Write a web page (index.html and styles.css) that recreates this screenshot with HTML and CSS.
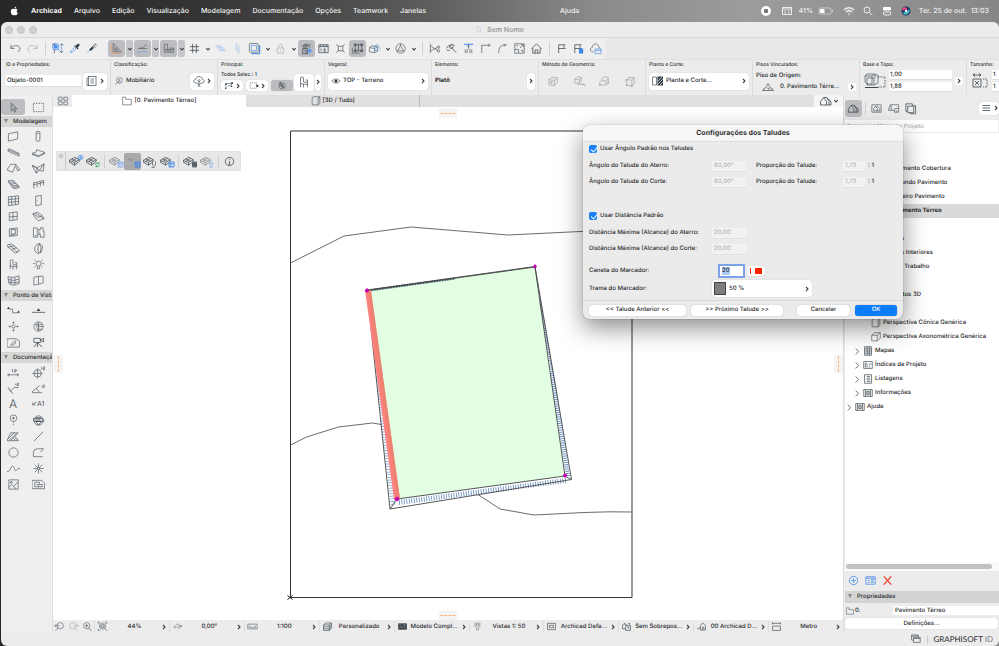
FILE: index.html
```html
<!DOCTYPE html>
<html lang="pt-BR">
<head>
<meta charset="utf-8">
<title>Sem Nome</title>
<link rel="stylesheet" href="styles.css">
</head>
<body>
<svg class="sprite" aria-hidden="true">
<symbol id="undo" viewBox="0 0 14 14"><path d="M2 3v4h4M2.200 6.800C4 3.500 10 2.500 11.500 6c1 2.500-.5 4.500-2 4.500"/></symbol>
<symbol id="redo" viewBox="0 0 14 14"><path d="M12 3v4H8M11.800 6.800C10 3.500 4 2.500 2.500 6c-1 2.500.5 4.500 2 4.500"/></symbol>
<symbol id="find" viewBox="0 0 14 14"><circle class="bl" cx="5" cy="5" r="3.500"/><circle class="bf" cx="5" cy="5" r="1.800"/><path class="b" d="M7.500 7.500l3.500 4M11.500 2v9"/><path class="d" d="M1.500 2.500h3M3.500 8v4M10 3.500L11.500 2 13 3.500M10 10l1.500 1.500L13 10"/></symbol>
<symbol id="pick" viewBox="0 0 14 14"><path class="b" d="M2.500 11.500l.8-2L7 5.800l1.500 1.500-3.800 3.500z"/><path class="df" d="M6.500 4l4 4 .8-.8-1-1.200 2-2q.5-1.500-.5-2t-2 .3L8 4.200l-.8-.8z"/></symbol>
<symbol id="inject" viewBox="0 0 14 14"><path class="b" d="M2.500 11.500L6 8"/><path class="df" d="M4.500 8l1.800 1.800 3.500-3.500L8 4.500z"/><path class="d" d="M8.500 3l3 3M9.700 4.200l2-2M10.700 1.500l2 2"/></symbol>
<symbol id="guide" viewBox="0 0 14 14"><path class="o" d="M2 2v10h11"/><path d="M3.500 1.500v9h8.500zM5.500 6v2.700h2.700z"/></symbol>
<symbol id="snap" viewBox="0 0 14 14"><path d="M2 7h10M4.500 5l2.500 2 4-4.500"/><path class="b" d="M2 10.500h10" stroke-dasharray="1.500 .7"/></symbol>
<symbol id="ruler" viewBox="0 0 14 14"><path d="M2.500 2.500v8.500h10V8H6V2.500zM2.500 8H6M4.500 9.500h6M8 6.500h4.500v2"/></symbol>
<symbol id="hash" viewBox="0 0 14 14"><path class="d" d="M5 2v10M9 2v10M2 5h10M2 9h10"/></symbol>
<symbol id="planeh" viewBox="0 0 14 14"><path class="b" d="M1.500 4h6l5 5.500h-6zM3.500 6h6M5 8h6M4.500 4l5 5.500"/></symbol>
<symbol id="planev" viewBox="0 0 14 14"><path class="b" d="M5.500 2l3 3v7l-3-3zM5.500 5.500l3 3"/></symbol>
<symbol id="frame" viewBox="0 0 14 14"><path class="b" d="M12.500 3.500v9h-9" stroke-width="1.400"/><rect x="1.500" y="1.500" width="9.500" height="9.500" rx="1"/><rect x="3.500" y="3.500" width="5.500" height="5.500" class="b"/></symbol>
<symbol id="lock" viewBox="0 0 14 14"><rect x="3.500" y="6.500" width="7" height="5.500" rx=".5"/><path d="M5 6.500V3.500q2-3 4 0v3M7 8.500v1.500"/></symbol>
<symbol id="group" viewBox="0 0 14 14"><path class="d" d="M2.500 4h7l2-1.500M3 12V7h5v5M3.500 4L5 2.500h4M9 4l2 2M4.500 9h2v3M2 12.500h7M3 5.500h5"/><circle class="bf" cx="10.500" cy="9.500" r="1.500"/><path class="b" d="M10.500 6.500v6M7.800 9.500h5.400M8.600 7.600l3.800 3.800M12.400 7.600l-3.800 3.800"/></symbol>
<symbol id="m12" viewBox="0 0 14 14"><path class="d" d="M2 11.500V3h10v8.500zM2 5h10M4 3v2M7 3v2M10 3v2M4.500 7v3M7 7.500h2v1H7.500V10H9.500"/></symbol>
<symbol id="cross" viewBox="0 0 14 14"><rect x="4.500" y="4.500" width="5" height="5"/><path d="M2.500 2.500l2.500 2.500M11.500 2.500L9 5M2.500 11.500L5 9M11.500 11.500L9 9"/></symbol>
<symbol id="edit" viewBox="0 0 14 14"><path d="M4.500 3h7v6.500h-7zM1.500 6v6h8"/><path class="d" d="M3.500 2h2v2h-2zM10.500 2h2v2h-2zM3.500 8.500h2v2h-2zM10.500 8.500h2v2h-2zM8 2v8"/></symbol>
<symbol id="cube3" viewBox="0 0 14 14"><path d="M1.500 6L4 4l6 1v5l-3 1.500-5.500-1zM1.500 6L7 7l3-2M7 7v4.500"/><path class="b" d="M6 6l3.500-3.500L13 7l-3.500 3.500z"/></symbol>
<symbol id="tri" viewBox="0 0 14 14"><circle cx="7" cy="7" r="5"/><path d="M7 3.500L4 9.500h6zM7 2v1.500M4 9.500L3 11M10 9.500L11 11"/></symbol>
<symbol id="split" viewBox="0 0 14 14"><path d="M2.500 2v10M2.500 4l7.500 5M2.500 9.500L10 6"/><circle cx="11.300" cy="5.500" r="1.300"/><circle cx="11.300" cy="9.500" r="1.300"/></symbol>
<symbol id="intersect" viewBox="0 0 14 14"><path class="d" d="M1.500 7q2-4.500 6.500-3.500M2 9h3M6 5l6 6.500M4.500 5.500L8 2l2 2-3.500 3.500z"/></symbol>
<symbol id="adjust" viewBox="0 0 14 14"><path class="b" d="M2 2.500h10" stroke-width="1.300"/><path d="M7 3v4M5.500 5L7 3.500 8.500 5M3.500 12V8M5.500 12V7.500M8.500 12V7.500M10.500 12V8"/></symbol>
<symbol id="corner" viewBox="0 0 14 14"><path d="M3 12V3.500h9M10 2l2 1.500L10 5"/></symbol>
<symbol id="fillet" viewBox="0 0 14 14"><path d="M3 12V9q1-5.500 6-6h3M9 2v3"/></symbol>
<symbol id="resize" viewBox="0 0 14 14"><rect x="2" y="2" width="10" height="10"/><path d="M2 8h4v4M7.500 6.500L11 3M8.500 3H11v2.500M3.500 4h2M8.500 9h2v2"/></symbol>
<symbol id="home" viewBox="0 0 14 14"><path class="d" d="M1.500 7.500L7 2l5.500 5.500M3 6.500V12h8V6.500M5.500 12V8.500h3V12"/></symbol>
<symbol id="flag" viewBox="0 0 14 14"><path class="d" d="M4 12V3h7L9 5l2 2H4"/></symbol>
<symbol id="flagb" viewBox="0 0 14 14"><path class="d" d="M3 12V3h7L8 5l2 2H3"/><path class="bf" d="M7.500 7H12v5.500H7.500z"/></symbol>
<symbol id="cloud" viewBox="0 0 14 14"><path d="M5 10.500H3.500C.5 10 1 6 3.500 6c0-5 7-5 7-.5l2 1.500"/><path class="b" d="M6.500 7.500H13v5H6.500zM6.500 9.200H13"/></symbol>
<symbol id="list" viewBox="0 0 14 14"><rect x="3.500" y="2.500" width="7.500" height="9"/><path d="M5.500 5h3.500M5.500 7h3.500M5.500 9h3.500M3.500 4H2v7.500h3"/></symbol>
<symbol id="classif" viewBox="0 0 14 14"><circle cx="7.500" cy="6" r="4.200"/><path d="M1.500 12l4-3.500M5.500 4.500l4 3M8.500 3.500L6 8.500h3"/></symbol>
<symbol id="tree" viewBox="0 0 14 14"><path d="M4.500 9C1 9.500 1 5.500 3.500 5.500 4 1.500 10 1.500 10.500 5.500 13 5.500 13 9.500 9.500 9L7 10.500zM7 5v7M5.500 6.500L7 8l1.500-1.500M5.500 12h3"/></symbol>
<symbol id="conn" viewBox="0 0 14 14"><path d="M3 11V5l8-1M10 4v4M5 8.500l5-3"/><path class="df" d="M2 4h2v2H2zM10 3h2v2h-2zM2 10h1.500v1.500H2zM9 7.500h2v1.500H9z"/></symbol>
<symbol id="dash" viewBox="0 0 14 14"><path stroke-dasharray="1.500 1" d="M2 3.500h8v7H2z"/><path class="df" d="M10 6h2.500v3H10z"/></symbol>
<symbol id="rotate" viewBox="0 0 14 14"><circle cx="7" cy="7.500" r="4"/><path class="d" d="M4.500 2v5.500H8L5 3M7 5.500v4h2.500z"/></symbol>
<symbol id="chair" viewBox="0 0 14 14"><path d="M3.500 7.500V2.500q1.500-1.500 3 0V7l4 .5v2l-4-.5-3-.5zM3.500 8v4M6.500 9v3.500M10.500 9v3M8.500 5h2v2.500"/></symbol>
<symbol id="eye" viewBox="0 0 14 14"><path d="M2 7q5-5 10 0-5 5-10 0z"/><circle class="df" cx="7" cy="7" r="1.800"/></symbol>
<symbol id="geo" viewBox="0 0 14 14"><path d="M2 5l3-2.500 6 .5v5l-3 3.500-6-.8zM2 5l6 .7L11 3M8 5.700v5.800M4 7h1.500v2H4z"/></symbol>
<symbol id="geo2" viewBox="0 0 14 14"><path d="M2 4.500L5 2l4 .5v4L7 9l-5-.8zM2 4.500l5 .7L9 2.500M7 5.200V9M4 10h8l1 1.500M10 9l3 2.500"/></symbol>
<symbol id="geo3" viewBox="0 0 14 14"><path d="M2 8l2-2 5 .5L11 4v4L8.500 11 2 10.500zM4 6V4l3-2 4 .5V4M8.500 7v4"/><circle class="df" cx="2" cy="11" r=".8"/><circle class="df" cx="11" cy="8.500" r=".8"/></symbol>
<symbol id="geo4" viewBox="0 0 14 14"><path d="M3 5l2-2.500 6 .5v6L8.500 12 3 11zM3 5l5.500.5L11 3M8.500 5.500V12M3 5L1 6"/><circle class="df" cx="3" cy="11" r=".8"/><circle class="df" cx="8.500" cy="12" r=".8"/></symbol>
<symbol id="plan" viewBox="0 0 14 14"><path d="M1.500 3h4v8h-4z"/><path class="df" d="M6.500 2.500H12v9H6.500z"/><path stroke="#ddd" d="M7 7l4-4M7 10l5-5M9 11l3-3"/></symbol>
<symbol id="house" viewBox="0 0 14 14"><path d="M1 10.500h12M4 10.500c-3-1-1-3 0-2l3-5 3 5c1-1 3 1 0 2M6 8h2v2"/></symbol>
<symbol id="houses" viewBox="0 0 14 14"><path class="d" d="M1.500 11V7.500l3-4 3 4V11zM4.500 3.500h3l4.500 4v3.500H7.500M7.500 3.500L10 7v4"/></symbol>
<symbol id="tall" viewBox="0 0 24 18"><path d="M2 4h7v8H4L2 10zM4 6h7v7H4zM2 4l2-2h8v4M9 4l3-2M12 3h3v8l-4 2"/><path class="d" d="M2 15.500h13" stroke-width="1.200"/><path class="d" stroke-dasharray="1.500 1" d="M15 5h7v10h-7"/></symbol>
<symbol id="size" viewBox="0 0 18 18"><path class="d" d="M2 3h8M4 1.500L2 3l2 1.500M8 1.500L10 3 8 4.500M2 7h8v8H2zM4 9l4 4M8 9l-4 4"/><path class="d" stroke-dasharray="1.500 1" d="M12 7h4v8h-4"/></symbol>
<symbol id="four" viewBox="0 0 14 14"><path d="M1.500 2.500h4.500v3.500H1.500zM8 2.500h4.500v3.500H8zM1.500 8h4.500v3.500H1.500zM8 8h4.500v3.500H8z"/></symbol>
<symbol id="folder" viewBox="0 0 14 14"><path d="M2 11.500V2.500h3.500V5H12v6.500z"/></symbol>
<symbol id="box3" viewBox="0 0 14 14"><path d="M2.500 3l2-1h7v8l-2 1.500h-7zM9.500 11.500V3.500l2-1.500"/></symbol>
<symbol id="arrow" viewBox="0 0 14 14"><path d="M4.500 2v9l2-2 1.500 3 1.500-.8L8 8.500h3z" fill="#aaa"/></symbol>
<symbol id="marq" viewBox="0 0 14 14"><path class="d" stroke-dasharray="1.500 1.200" d="M1.500 2.500h11v9h-11z"/></symbol>
<symbol id="wall" viewBox="0 0 14 14"><path d="M1.500 4l10-2v7.500l-10 2.500z"/></symbol>
<symbol id="column" viewBox="0 0 14 14"><path d="M4.500 3v8.500q2.500 1.500 4 0V3"/><ellipse cx="6.500" cy="2.500" rx="2" ry="1.200"/></symbol>
<symbol id="beam" viewBox="0 0 14 14"><path d="M1 4l1.500-1L13 8v3L1 5.500zM1 4l12 5"/></symbol>
<symbol id="slab" viewBox="0 0 14 14"><path d="M0 8l4.500-1.500L5 4l9 3-7 3.500zM0 8v1l7 2.500 7-3.500V7"/></symbol>
<symbol id="roof" viewBox="0 0 14 14"><path d="M4 2.500h5.500L6 11 0 8.500zM9.500 2.500l4.500 6-2.500 1-2-4.500"/></symbol>
<symbol id="shell" viewBox="0 0 14 14"><path d="M0 3.500l6 2.500L13 2l-1 8-4-1-3.500 3zM0 3.500L8 9l5-7M6 6L4.500 12"/></symbol>
<symbol id="stair" viewBox="0 0 14 14"><path d="M1.500 3l5-.5 7 7.500-5 1.500zM3.500 4.800L8.500 4M5 6.500l5-.7M6.500 8.500l5.500-1M7.500 10l5.500-1M1.500 3v1.500l6 7.500"/></symbol>
<symbol id="rail" viewBox="0 0 14 14"><path d="M1 5.500l12-3M1 7.500l12-3M2 5.500v6M5.500 5v5M9 4v5M12.500 3v5"/></symbol>
<symbol id="curtain" viewBox="0 0 14 14"><path d="M1.500 3l11-1v9l-11 1.500zM1.500 6l11-1M1.500 9l11-1M5 2.500v9.500M9 2.300v9.200"/></symbol>
<symbol id="door" viewBox="0 0 14 14"><path d="M4 2.500l6-1v10L4 12.500zM5.500 7v1"/></symbol>
<symbol id="window" viewBox="0 0 14 14"><path d="M2.500 3l8.500-1v8.500l-8.500 1zM2.500 7.500l8.500-.7M6.500 2.500v8.500"/></symbol>
<symbol id="sky" viewBox="0 0 14 14"><path d="M1 4l5-1.500L11 6 7 8zM3 8l4 3.500 6-2L9 7M1 4l2 4M11 6l2 3.500M4 3.500l5 3.500"/></symbol>
<symbol id="open" viewBox="0 0 14 14"><path d="M2.500 3l8.500-.8v8l-8.500 1zM4.500 4l4.500-.5v5l-4.500 2zM4.500 9L9 8.500"/></symbol>
<symbol id="zone" viewBox="0 0 14 14"><path d="M1.500 2h4v2H9V2h3v4h1v6H9V9H6v3H1.500zM5 5.500h3M5 7.500h4M3 10h2"/></symbol>
<symbol id="mesh" viewBox="0 0 14 14"><path d="M-1 3.500L5 2l8.500 7.500-4.500 2.500zM2 5.500L8 4M5 8l5.500-2M2.500 3l8.500 8M2 5.500L0 4.500"/></symbol>
<symbol id="morph" viewBox="0 0 14 14"><path d="M5 3l3-1.500 3.500 3L10 11l-4 1.500-3-3Q2 6 5 3zM8 1.500q-3 5-1 10.500M8 2q3 4 1 9"/></symbol>
<symbol id="lamp" viewBox="0 0 14 14"><circle cx="7" cy="6" r="2.700"/><path d="M5.800 9v2.500h2.400V9M1 6h2M11 6h2M2.500 2L4 3.200M11.500 2L10 3.200M2.500 10L4 8.800M11.500 10L10 8.800"/></symbol>
<symbol id="curved" viewBox="0 0 14 14"><path d="M1 3q6 2 12-1v8q-6 4-11 0zM1.500 6q6 2 11.500-.5M1.500 8.500q6 2 11.500 0M4.500 4v7M8.500 4v7.500"/></symbol>
<symbol id="panel" viewBox="0 0 14 14"><path d="M2 3.500l5-1v8.500l-5 1zM7 2.500h5v7L7 11"/></symbol>
<symbol id="section" viewBox="0 0 14 14"><path d="M2 5.500h4v4h6"/><path class="df" d="M0 5.500L1.500 3 3 5.500zM11 9.500L12.500 7 14 9.500z"/></symbol>
<symbol id="elev" viewBox="0 0 14 14"><path class="d" d="M0 9h14"/><path class="df" d="M5 7.500l2-3 2 3z"/></symbol>
<symbol id="interior" viewBox="0 0 14 14"><circle cx="7" cy="7" r="1.800"/><path class="df" d="M5.800 3.500L7 1.500l1.200 2zM5.800 10.500L7 12.500l1.200-2zM3.500 5.800L1.500 7l2 1.200zM10.500 5.800L12.500 7l-2 1.200z"/></symbol>
<symbol id="globe" viewBox="0 0 14 14"><circle cx="7" cy="7" r="5"/><path d="M7 2v10M7 7h5M3 4.500q4 2 8 0M7 10h4M7 3Q3 7 7 11"/></symbol>
<symbol id="sheet" viewBox="0 0 14 14"><path d="M0 12V3h10l3.500 2.500V12zM4 9.500L8 6l1.500 1.500L6 10zM8 5.500l2-.5"/></symbol>
<symbol id="camera" viewBox="0 0 14 14"><path class="d" d="M2 2.500h7v4.500H2zM9 4.500l3.500-2v4zM6 7v5M6 7l-4 5M6 7l5 5"/></symbol>
<symbol id="dim" viewBox="0 0 14 14"><path d="M0 9.500h13M2 8v3M11.500 8v3M5 4.500l1-1v3M8 4h2v1.200H8V6.500h2"/></symbol>
<symbol id="level" viewBox="0 0 14 14"><circle cx="6" cy="8" r="4"/><path d="M6 2.500v11M.5 8h11M10.500 1v3M12 1h2v1.500h-2V4h2"/></symbol>
<symbol id="radial" viewBox="0 0 14 14"><path d="M1 5.500q2 5 5.500 7M4.500 9l3-3h5M2.500 8l3 3M9.500 1.500v2.500M11 1.500h1.500v1H11v1.500h2"/></symbol>
<symbol id="angle" viewBox="0 0 14 14"><path d="M-1 11.500h12M-1 11.500L8 4M4.500 7q3 2 3 4.500M15 3q-2 4-3.500 3t0-2.500T15 6"/></symbol>
<symbol id="pin" viewBox="0 0 14 14"><circle cx="7" cy="4.500" r="3.500"/><circle class="df" cx="7" cy="4.500" r="1"/><path d="M7 8V13" stroke-dasharray="1.500 1"/></symbol>
<symbol id="changed" viewBox="0 0 14 14"><circle cx="7" cy="7" r="5"/><path class="d" d="M1.500 5h10l1 3h-10zM4 8h6l-3 4zM4 4h6M4 6.500h5"/></symbol>
<symbol id="fill" viewBox="0 0 14 14"><path d="M0 11.500L4 3h8L8.500 7l4 4.500zM1 9.500L8 3M2 11.500L10 4M4 11.500L8 7.500M7 11.500l2.500-2.500M9.500 11.500l1.500-1.500"/></symbol>
<symbol id="line" viewBox="0 0 14 14"><path d="M2 12L12 2"/></symbol>
<symbol id="circle" viewBox="0 0 14 14"><circle cx="7" cy="7" r="5"/></symbol>
<symbol id="poly" viewBox="0 0 14 14"><path d="M1.500 11.500h10M1.500 11.500V7q0-4 4-4h7L9 6.500"/></symbol>
<symbol id="spline" viewBox="0 0 14 14"><path d="M0 10C3 12.500 4 3 6.500 4.500S7.500 11 10 9s1.500-3 4-1.500"/></symbol>
<symbol id="hot" viewBox="0 0 14 14"><path d="M7 1.500v11M1.500 7h11M3 3l8 8M11 3l-8 8"/><circle cx="7" cy="7" r="1.200" fill="#fff"/></symbol>
<symbol id="pic" viewBox="0 0 14 14"><path d="M2 2h10v10H2zM2 10l3-3 2 2 5-5M7 9l3 3M4 4h1.500v1.500H4z"/></symbol>
<symbol id="drawing" viewBox="0 0 14 14"><path d="M0 11.500v-9h10l3.500 3v6zM3 4.500v5h8V7H8V4.500zM5 7h2v2.500"/></symbol>
<symbol id="slope" viewBox="0 0 14 14"><path class="d" d="M0 6l6-3.500 5 2.500L6 8zM0 6v1.500L6 11l5-4V5M3 4.300l5 2.500M3 7l5-3.500M6 8v3"/></symbol>
<symbol id="plus" viewBox="0 0 14 14"><circle cx="7" cy="7" r="4.500"/><path d="M7 4.500v5M4.500 7h5"/></symbol>
<symbol id="card" viewBox="0 0 14 14"><path d="M2 3h10v8H2zM2 4.500h10M4 7h2M7.500 6h3M7.500 7.500h3M7.500 9h3M4 9h2"/></symbol>
<symbol id="grid" viewBox="0 0 14 14"><path d="M2 2h10v10H2zM2 5.500h10M6 5.500V12" stroke-width="1.800"/></symbol>
<symbol id="cycle" viewBox="0 0 14 14"><path d="M2 8q2-6 8-3M10 2v3H7M12 7q-2 6-8 3M4 13v-3h3" stroke-width="1.600"/></symbol>
<symbol id="u" viewBox="0 0 14 14"><path d="M3 1v7q3 6 6 0V1M1 13h6" stroke-width="1.600"/></symbol>
<symbol id="up" viewBox="0 0 14 14"><path d="M4 13V5H2l4-4 4 4H8v8z" stroke-width="1.300"/></symbol>
<symbol id="x" viewBox="0 0 14 14"><path d="M3 2.500l8 9M11 2.500l-8 9"/></symbol>
<symbol id="info" viewBox="0 0 14 14"><circle class="d" cx="7" cy="7" r="4.500"/><path class="d" d="M7 6.200V10M7 4v1.200M6 10h2"/></symbol>
<symbol id="map" viewBox="0 0 14 14"><path d="M2 3h10v8H2zM4 9.500V7l2-2.500L8 7v2.500zM6 4.500h2L10.500 7v2.500H8"/></symbol>
<symbol id="layout" viewBox="0 0 14 14"><path d="M1.500 9l2-6h9v8H8V9zM4.500 3v6M8 9l.5-2h4M10 9v2"/></symbol>
<symbol id="stack" viewBox="0 0 14 14"><path class="d" d="M4 4.500h6.500v7H4zM4 10H2V2h7v2.500M6 11.500l1 1.200h5.500V4l-2-.5"/></symbol>
<symbol id="menu" viewBox="0 0 14 14"><path class="d" d="M3.500 4.500h7.500M3.500 7h7.500M3.500 9.500h7.500"/></symbol>
<symbol id="table" viewBox="0 0 14 14"><path class="d" d="M3 2h8v10H3zM3 4.500h8M3 7h8M3 9.500h8M6 2v10M8.500 2v10"/></symbol>
<symbol id="index" viewBox="0 0 14 14"><path class="d" d="M2 3h10v8H2zM4 5v5M6 6v4M8 6h3M9 8v2M4 5h2"/></symbol>
<symbol id="lists" viewBox="0 0 14 14"><path class="d" d="M3 2h8v10H3zM5.500 4h4M5.500 6h4M5.500 8h4M5.500 10h4"/></symbol>
<symbol id="infos" viewBox="0 0 14 14"><path class="d" d="M2 3h10v8H2zM4 3v8M10 3v8M5.500 5h3v4h-3zM7 5v4"/></symbol>
<symbol id="zprev" viewBox="0 0 14 14"><circle cx="8" cy="6" r="4"/><path d="M5 9l-3 3.500M1 6h6M3 4L1 6l2 2"/></symbol>
<symbol id="znext" viewBox="0 0 14 14"><circle cx="6" cy="6" r="4"/><path d="M9 9l3 3.500M7 6h6M11 4l2 2-2 2"/></symbol>
<symbol id="zin" viewBox="0 0 14 14"><circle cx="6" cy="6" r="4"/><path class="d" d="M9 9l3 3.500M6 4v4M4 6h4"/></symbol>
<symbol id="zfit" viewBox="0 0 14 14"><circle cx="7" cy="6.500" r="4"/><path class="d" d="M10 9.500l3 3M1.500 1.500h2M1.500 1.500v2M12.500 1.500h-2M12.500 1.500v2M1.500 12V10M1.500 12h2M5 5h4v3H5z"/></symbol>
<symbol id="turn" viewBox="0 0 14 14"><path d="M5 9L3 7.500 7 3.500l2 2M6 9l3.500-3.500L11.500 7 8 10.500M3 7L1.500 8.500M12 5v2h-2"/></symbol>
<symbol id="scale" viewBox="0 0 14 14"><path d="M1 4h12v6H1zM3 6v2h8V6"/></symbol>
<symbol id="layers" viewBox="0 0 14 14"><path class="d" d="M2 5l3-2.500h7L9.500 5zM2 7.500h7.500L12 5M2 10h7.500L12 7.500M2 12h7.500L12 9.500v-7M2 5v7M9.500 5v7"/></symbol>
<symbol id="model" viewBox="0 0 14 14"><path class="df" d="M1.500 3h11v8h-11z"/><path d="M3 5h2M7 5h4M3 9l2-2 2 2 2-2 2 2" stroke="#bbb"/></symbol>
<symbol id="pens" viewBox="0 0 14 14"><path d="M4 2v5l2 2v3M10 2v5L8 9v3M6 2v4l1 1 1-1V2"/></symbol>
<symbol id="opt" viewBox="0 0 14 14"><path class="d" d="M2 3h10v8H2zM4.500 5.500h5v3h-5z"/></symbol>
<symbol id="over" viewBox="0 0 14 14"><path class="d" d="M2 10V5l3-2v2h3M6 6h6v6H6zM2 10h4M8 8h2v2M9 3h2v3"/></symbol>
<symbol id="reno" viewBox="0 0 14 14"><path class="d" d="M1.500 10l4-1.500V6l3-3.500L12 6v5.500H5.500V8.500M8 11V8h2v3"/></symbol>
<symbol id="meter" viewBox="0 0 14 14"><path class="d" d="M2 3h10M2 1.500v3M12 1.500v3M2 6.500h10V12H2z"/></symbol>
<symbol id="windows" viewBox="0 0 14 14"><path class="d" d="M2 2.500h8.500v3M2 2.500v6.500h2M2 4h8.500M4.500 5.500H13V12H4.500zM4.500 7H13"/></symbol>
<symbol id="chev" viewBox="0 0 6 6"><path class="d" d="M2 1l2 2-2 2" stroke-width="1.100"/></symbol>
<symbol id="chevt" viewBox="0 0 6 6"><path d="M1.500.5L4 3 1.500 5.500"/></symbol>
<symbol id="down" viewBox="0 0 6 6"><path class="d" d="M1.200 2.200L3 4l1.800-1.800" stroke-width="1.100"/></symbol>
</svg>

<nav class="menubar">
  <svg class="apple" viewBox="0 0 14 16"><path d="M10.500 8.300c0-1.700 1.300-2.400 1.500-2.600-.9-1.200-2.200-1.400-2.700-1.400-1.100 0-1.800.7-2.400.7s-1.400-.7-2.400-.6C2.600 4.400 1 6 1 8.800c0 3 2 6 3.600 6 .9 0 1.300-.6 2.400-.6s1.400.6 2.400.6c1.300 0 2.500-2.200 3-3.600-1.300-.6-1.900-1.600-1.900-2.900zM9 3.100c.6-.7.900-1.500.8-2.400C8.600.8 7 2 7.100 4 7.900 4 8.600 3.600 9 3.100z"/></svg>
  <a href="#" class="app">Archicad</a><a href="#">Arquivo</a><a href="#">Edição</a><a href="#">Visualização</a><a href="#">Modelagem</a><a href="#">Documentação</a><a href="#">Opções</a><a href="#">Teamwork</a><a href="#">Janelas</a><a href="#" class="help">Ajuda</a>
  <div class="tray">
    <svg viewBox="0 0 14 14"><circle cx="7" cy="7" r="5" class="wf"/><rect x="5" y="5" width="4" height="4" rx="1" fill="#777" stroke="none"/></svg>
    <svg class="cal" viewBox="0 0 14 14"><path d="M2.500 3.500h9v7h-9zM2.500 5h9M4.500 7h1.500M8 7h1.500M4.500 9h1.500M8 9h1.500"/></svg>
    <span class="pct">41%</span>
    <svg class="batt" viewBox="0 0 16 14"><rect x="1" y="4" width="12" height="6" rx="1.500" opacity=".6"/><rect class="wf" x="2" y="5" width="4.500" height="4"/><path d="M14.500 6v2" opacity=".6"/></svg>
    <svg viewBox="0 0 14 14"><path d="M2 6q5-4.500 10 0M4 8q3-2.700 6 0" stroke-width="1.500"/><path class="wf" d="M5.700 9.500h2.600L7 11z"/></svg>
    <svg viewBox="0 0 14 14"><circle cx="6" cy="6" r="3"/><path d="M8.300 8.300l3 3"/></svg>
    <svg viewBox="0 0 14 14"><rect class="wf" x="3" y="3" width="8" height="3.500" rx="1"/><rect x="3.500" y="8" width="7" height="3" rx="1"/></svg>
    <svg viewBox="0 0 14 14"><circle cx="7" cy="7" r="4.500" fill="#263259" stroke="none"/><path d="M3.500 6q3-4 4 1" stroke="#ec4b85" stroke-width="2"/><path d="M4.500 9q4 2 5.500-3" stroke="#3cc6dc" stroke-width="2"/><circle cx="7" cy="7" r="1.200" class="wf"/></svg>
    <span class="date">Ter. 25 de out.&nbsp; 13:03</span>
  </div>
</nav>

<div class="window">
<header class="titlebar"><span class="lights"><i></i><i></i><i></i></span><svg class="docicon" viewBox="0 0 8 8"><path d="M1 1l4 1v5L2 6z"/></svg><h1>Sem Nome</h1></header>

<div class="toolbar">
  <button class="tb"><svg><use href="#undo"/></svg></button><button class="tb off"><svg><use href="#redo"/></svg></button><i class="sep"></i>
  <button class="tb"><svg><use href="#find"/></svg></button><button class="tb"><svg><use href="#pick"/></svg></button><button class="tb"><svg><use href="#inject"/></svg></button><i class="sep clear"></i>
  <button class="tb on"><svg><use href="#guide"/></svg></button><button class="tc on"><svg class="s"><use href="#down"/></svg></button>
  <button class="tb on"><svg><use href="#snap"/></svg></button><button class="tc on"><svg class="s"><use href="#down"/></svg></button>
  <button class="tb on"><svg><use href="#ruler"/></svg></button><button class="tc on"><svg class="s"><use href="#down"/></svg></button>
  <button class="tb"><svg><use href="#hash"/></svg></button><button class="tc"><svg class="s"><use href="#down"/></svg></button>
  <button class="tb off"><svg><use href="#planeh"/></svg></button><button class="tb off"><svg><use href="#planev"/></svg></button><button class="tb"><svg><use href="#frame"/></svg></button><button class="tc"><svg class="s"><use href="#down"/></svg></button>
  <button class="tb off"><svg><use href="#lock"/></svg></button><button class="tc"><svg class="s"><use href="#down"/></svg></button>
  <button class="tb on"><svg><use href="#group"/></svg></button><button class="tb"><svg><use href="#m12"/></svg></button><button class="tb"><svg><use href="#cross"/></svg></button><button class="tb on"><svg><use href="#edit"/></svg></button><button class="tb"><svg><use href="#cube3"/></svg></button><button class="tc"><svg class="s"><use href="#down"/></svg></button>
  <button class="tb"><svg><use href="#tri"/></svg></button><button class="tc"><svg class="s"><use href="#down"/></svg></button><i class="sep"></i>
  <button class="tb"><svg><use href="#split"/></svg></button><button class="tb"><svg><use href="#intersect"/></svg></button><button class="tb"><svg><use href="#adjust"/></svg></button><button class="tb"><svg><use href="#corner"/></svg></button><button class="tb"><svg><use href="#fillet"/></svg></button><button class="tb"><svg><use href="#resize"/></svg></button><button class="tb"><svg><use href="#home"/></svg></button><i class="sep"></i>
  <button class="tb"><svg><use href="#flag"/></svg></button><button class="tb"><svg><use href="#flagb"/></svg></button><button class="tb"><svg><use href="#cloud"/></svg></button>
</div>

<div class="infobox">
  <section class="first"><label for="objid">ID e Propriedades:</label><div class="line"><input id="objid" class="grow" value="Objeto-0001"><button class="wb"><svg><use href="#list"/></svg><svg class="s"><use href="#chev"/></svg></button></div></section>
  <section><h2>Classificação:</h2><div class="line"><svg class="cls"><use href="#classif"/></svg><span class="grow">Mobiliário</span><button class="wb"><svg><use href="#tree"/></svg><svg class="s"><use href="#chev"/></svg></button></div></section>
  <section class="main-sec"><h2>Principal:</h2><div class="line split"><div class="grow"><p>Todos Selec.: 1</p><div class="mini"><button class="wb"><svg><use href="#conn"/></svg><svg class="s"><use href="#chev"/></svg></button><button class="wb"><svg><use href="#dash"/></svg><svg class="s"><use href="#chev"/></svg></button><button class="wb on"><svg><use href="#rotate"/></svg></button></div></div><button class="wb seat"><svg><use href="#chair"/></svg></button><button class="wb thin"><svg class="s"><use href="#chev"/></svg></button></div></section>
  <section><h2>Vegetal:</h2><div class="line"><button class="wb grow text"><svg class="eye"><use href="#eye"/></svg><span>TOP - Terreno</span><svg class="s"><use href="#chev"/></svg></button></div></section>
  <section><h2>Elemento:</h2><div class="line"><b class="grow">Platô</b><button class="wb thin"><svg class="s"><use href="#chev"/></svg></button></div></section>
  <section><h2>Método de Geometria:</h2><div class="line geo"><svg><use href="#geo"/></svg><svg><use href="#geo2"/></svg><svg><use href="#geo3"/></svg><svg><use href="#geo4"/></svg></div></section>
  <section><h2>Planta e Corte:</h2><div class="line"><button class="wb grow text"><svg><use href="#plan"/></svg><span>Planta e Corte...</span><svg class="s"><use href="#chev"/></svg></button></div></section>
  <section><h2>Pisos Vinculados:</h2><div class="floors"><p>Piso de Origem:</p><div><svg><use href="#house"/></svg><span>0. Pavimento Térre...</span><button class="round"><svg class="s"><use href="#chev"/></svg></button></div></div></section>
  <section><h2>Base e Topo:</h2><div class="base"><svg class="tallicon"><use href="#tall"/></svg><div class="pair"><input aria-label="Topo" value="1,00"><input aria-label="Base" value="1,88"></div><button class="round"><svg class="s"><use href="#chev"/></svg></button></div></section>
  <section class="last"><h2>Tamanho:</h2><div class="base"><svg class="sizeicon"><use href="#size"/></svg><div class="pair"><input aria-label="Largura" value="1"><input aria-label="Altura" value="1"></div></div></section>
</div>

<div class="work">
<aside class="toolbox">
  <div class="tools top"><button class="on"><svg><use href="#arrow"/></svg></button><button><svg><use href="#marq"/></svg></button></div>
  <h3>Modelagem</h3>
  <div class="tools">
    <button><svg><use href="#wall"/></svg></button><button><svg><use href="#column"/></svg></button>
    <button><svg><use href="#beam"/></svg></button><button><svg><use href="#slab"/></svg></button>
    <button><svg><use href="#roof"/></svg></button><button><svg><use href="#shell"/></svg></button>
    <button><svg><use href="#stair"/></svg></button><button><svg><use href="#rail"/></svg></button>
    <button><svg><use href="#curtain"/></svg></button><button><svg><use href="#door"/></svg></button>
    <button><svg><use href="#window"/></svg></button><button><svg><use href="#sky"/></svg></button>
    <button><svg><use href="#open"/></svg></button><button><svg><use href="#zone"/></svg></button>
    <button><svg><use href="#mesh"/></svg></button><button><svg><use href="#morph"/></svg></button>
    <button><svg><use href="#chair"/></svg></button><button><svg><use href="#lamp"/></svg></button>
    <button><svg><use href="#curved"/></svg></button><button><svg><use href="#panel"/></svg></button>
  </div>
  <h3>Ponto de Vista</h3>
  <div class="tools">
    <button><svg><use href="#section"/></svg></button><button><svg><use href="#elev"/></svg></button>
    <button><svg><use href="#interior"/></svg></button><button><svg><use href="#globe"/></svg></button>
    <button><svg><use href="#sheet"/></svg></button><button><svg><use href="#camera"/></svg></button>
  </div>
  <h3>Documentação</h3>
  <div class="tools">
    <button><svg><use href="#dim"/></svg></button><button><svg><use href="#level"/></svg></button>
    <button><svg><use href="#radial"/></svg></button><button><svg><use href="#angle"/></svg></button>
    <button class="glyph big">A</button><button class="glyph">↙A1</button>
    <button><svg><use href="#pin"/></svg></button><button><svg><use href="#changed"/></svg></button>
    <button><svg><use href="#fill"/></svg></button><button><svg><use href="#line"/></svg></button>
    <button><svg><use href="#circle"/></svg></button><button><svg><use href="#poly"/></svg></button>
    <button><svg><use href="#spline"/></svg></button><button><svg><use href="#hot"/></svg></button>
    <button><svg><use href="#pic"/></svg></button><button><svg><use href="#drawing"/></svg></button>
  </div>
</aside>

<main class="center">
  <div class="tabs"><button class="quad"><svg><use href="#four"/></svg></button><button class="tab active"><svg><use href="#folder"/></svg>[0. Pavimento Térreo]</button><button class="tab"><svg><use href="#box3"/></svg>[3D / Tudo]</button><span class="grow"></span><button class="quick"><svg><use href="#houses"/></svg><svg class="s"><use href="#down"/></svg></button></div>
  <div class="canvas">
    <svg class="drawing" viewBox="53 107 790 513" preserveAspectRatio="xMinYMin slice">
      <path d="M290.500 131h341.500v466.500H290.500z" stroke="#333"/>
      <path d="M287.500 595.500l5 4M292.500 595.500l-5 4" stroke="#222"/>
      <path d="M290.500 263L344 236l67-9 97 8 124-6M290.500 445l16-8 32-10 34-4 9 1.500M478 494.500l22 14.500 34 6 50-2.500 26-.7 22 .2"/>
      <path d="M367 290L397 499 565 476 535 266.500z" fill="#e2ffe4" stroke="none"/>
      <path d="M382.500 418L393.500 506" stroke="#5b87bd" stroke-width="5" stroke-dasharray=".8 1.900" opacity=".8"/>
      <path d="M374 350L382 416" stroke="#5b87bd" stroke-width="2.500" stroke-dasharray=".8 1.800" opacity=".8"/>
      <path d="M399 502.500L567 480.300" stroke="#5b87bd" stroke-width="5" stroke-dasharray=".8 1.700"/>
      <path d="M552 373L568 476" stroke="#5b87bd" stroke-width="4" stroke-dasharray=".9 1.300"/>
      <path d="M540 300L552.500 373" stroke="#456fa5" stroke-width="2" stroke-dasharray=".9 1"/>
      <path d="M369 290.500L455 278.500" stroke="#24415d" stroke-width="2" stroke-dasharray="1 .6"/>
      <path d="M367 290L535 266.500 571.500 479.500 390 509zM367 290.500L535 267 565 476 397 499M397 499l-7 10M565 476l6 3.500" stroke="#444" stroke-width=".9"/>
      <path d="M365 290h5.500L400 499h-6z" fill="#ff817e" stroke="none"/><path d="M367.500 290h3.500L400 499h-3z" fill="#ee8272" stroke="none"/>
      <path d="M364.500 290.500l2.500-2.500 2.500 2.500-2.500 2.500zM533 266.500l2-2.500 2 2.500-2 2.500zM394 499l3-2.500 3 2.500-3 2.500zM562.500 475.500l2.500-2.500 2.500 2.500-2.500 2.500z" fill="#c400b0" stroke="none"/>
      <path d="M439 108.500h18v9h-18zM439 611h18v9h-18zM54 355h9v18h-9zM834 355h9v18h-9z" fill="#f4f4f4" stroke="none"/>
      <path d="M440 113.500h16M440 615.500h16M58.500 356v16M838.500 356v16" stroke="#ffb27d" stroke-dasharray="3 1.300"/>
    </svg>
    <div class="palette">
      <span class="grip"></span>
      <button><svg><use href="#slope"/></svg><svg class="badge blue"><use href="#plus"/></svg></button>
      <button><svg><use href="#slope"/></svg><svg class="badge low green"><use href="#cycle"/></svg></button><i class="sep"></i>
      <button class="off"><svg><use href="#slope"/></svg><svg class="badge low blue"><use href="#grid"/></svg></button>
      <button class="on"><svg viewBox="0 0 14 14"><path d="M3 4l3 2M6 5h1"/></svg><svg class="badge low blue"><use href="#grid"/></svg></button>
      <button><svg><use href="#slope"/></svg><svg class="badge low"><use href="#u"/></svg></button>
      <button><svg><use href="#slope"/></svg><svg class="badge low blue"><use href="#grid"/></svg></button><i class="sep"></i>
      <button><svg><use href="#slope"/></svg><svg class="badge low"><use href="#table"/></svg></button>
      <button class="off"><svg><use href="#slope"/></svg><svg class="badge low blue"><use href="#up"/></svg></button><i class="sep"></i>
      <button><svg><use href="#info"/></svg></button>
    </div>
  </div>
  <div class="status">
    <div class="zooms"><svg><use href="#zprev"/></svg><svg class="off"><use href="#znext"/></svg><svg><use href="#zin"/></svg></div>
    <button><svg><use href="#zfit"/></svg><span>44%</span><svg class="s"><use href="#chev"/></svg></button>
    <button><svg><use href="#turn"/></svg><span>0,00°</span><svg class="s"><use href="#chev"/></svg></button>
    <button><svg><use href="#scale"/></svg><span>1:100</span><svg class="s"><use href="#chev"/></svg></button>
    <button><svg><use href="#layers"/></svg><span>Personalizado</span><svg class="s"><use href="#chev"/></svg></button>
    <button><svg><use href="#model"/></svg><span>Modelo Compl...</span><svg class="s"><use href="#chev"/></svg></button>
    <button><svg><use href="#pens"/></svg><span>Vistas 1: 50</span><svg class="s"><use href="#chev"/></svg></button>
    <button><svg><use href="#opt"/></svg><span>Archicad Defa...</span><svg class="s"><use href="#chev"/></svg></button>
    <button><svg><use href="#over"/></svg><span>Sem Sobrepos...</span><svg class="s"><use href="#chev"/></svg></button>
    <button><svg><use href="#reno"/></svg><span>00 Archicad D...</span><svg class="s"><use href="#chev"/></svg></button>
    <button><svg><use href="#meter"/></svg><span>Metro</span><svg class="s"><use href="#chev"/></svg></button>
  </div>
</main>

<aside class="navigator">
  <div class="navtop"><button class="tb on"><svg><use href="#houses"/></svg></button><i class="sep"></i><button class="tb"><svg><use href="#map"/></svg></button><button class="tb"><svg><use href="#layout"/></svg></button><button class="tb"><svg><use href="#stack"/></svg></button><span class="grow"></span><button class="wb"><svg><use href="#menu"/></svg><svg class="s"><use href="#chev"/></svg></button></div>
  <input class="search" aria-label="Pesquisar" placeholder="Pesquisar Mapa do Projeto">
  <ul class="maptree">
    <li class="l3">3. Pavimento Cobertura</li>
    <li class="l3">2. Segundo Pavimento</li>
    <li class="l3">1. Primeiro Pavimento</li>
    <li class="l3 sel">0. Pavimento Térreo</li>
    <li></li>
    <li class="l2">Elevações</li>
    <li class="l2">Elevações Interiores</li>
    <li class="l2">Folhas de Trabalho</li>
    <li></li>
    <li class="l2">Documentos 3D</li>
    <li></li>
    <li class="l3"><svg><use href="#box3"/></svg>Perspectiva Cônica Genérica</li>
    <li class="l3"><svg viewBox="0 0 14 14"><path d="M2 5l3-3h7v6.500l-3.500 3H2zM2 5h6.500L12 2M8.500 5v6.500"/></svg>Perspectiva Axonométrica Genérica</li>
    <li class="l2"><svg class="s"><use href="#chevt"/></svg><svg><use href="#table"/></svg>Mapas</li>
    <li class="l2"><svg class="s"><use href="#chevt"/></svg><svg><use href="#index"/></svg>Índices de Projeto</li>
    <li class="l2"><svg class="s"><use href="#chevt"/></svg><svg><use href="#lists"/></svg>Listagens</li>
    <li class="l2"><svg class="s"><use href="#chevt"/></svg><svg><use href="#infos"/></svg>Informações</li>
    <li class="l1"><svg class="s"><use href="#chevt"/></svg><svg><use href="#infos"/></svg>Ajuda</li>
  </ul>
  <div class="hscroll"><i></i></div>
  <div class="navactions"><svg class="blue"><use href="#plus"/></svg><svg class="blue"><use href="#card"/></svg><svg class="red"><use href="#x"/></svg></div>
  <h3>Propriedades</h3>
  <div class="prop"><svg><use href="#folder"/></svg><label for="storey">0.</label><input id="storey" value="Pavimento Térreo"></div>
  <button class="defs">Definições...</button>
</aside>
</div>
<footer><svg><use href="#windows"/></svg><span class="bar">|</span><span class="brand">GRAPHISOFT <i>ID</i></span></footer>
</div>

<form class="dialog" role="dialog" aria-labelledby="dt">
  <h2 id="dt">Configurações dos Taludes</h2>
  <div class="dbody">
    <label class="check"><input type="checkbox" checked>Usar Ângulo Padrão nos Taludes</label>
    <div class="row"><label for="a1">Ângulo do Talude do Aterro:</label><input id="a1" value="60,00°" disabled><label class="ratio" for="r1">Proporção do Talude:</label><input id="r1" value="1,73" disabled><span>: 1</span></div>
    <div class="row"><label for="a2">Ângulo do Talude do Corte:</label><input id="a2" value="60,00°" disabled><label class="ratio" for="r2">Proporção do Talude:</label><input id="r2" value="1,73" disabled><span>: 1</span></div>
    <label class="check second"><input type="checkbox" checked>Usar Distância Padrão</label>
    <div class="row"><label for="d1">Distância Máxima (Alcance) do Aterro:</label><input id="d1" value="20,00" disabled></div>
    <div class="row"><label for="d2">Distância Máxima (Alcance) do Corte:</label><input id="d2" value="20,00" disabled></div>
    <div class="row pen"><label for="pen">Caneta do Marcador:</label><div class="penbox"><span class="focus"><mark>20</mark><input id="pen" aria-label="Caneta"></span><button type="button" class="wb color"><i></i><b></b></button></div></div>
    <div class="row hatchrow"><label for="hatch">Trama do Marcador:</label><button type="button" id="hatch" class="wb"><i></i><span>50 %</span><svg class="s"><use href="#chev"/></svg></button></div>
  </div>
  <div class="dfoot"><button type="button" class="prev">&lt;&lt; Talude Anterior &lt;&lt;</button><button type="button" class="next">&gt;&gt; Próximo Talude &gt;&gt;</button><button type="button" class="cancel">Cancelar</button><button type="button" class="ok">OK</button></div>
</form>
</body>
</html>
```
FILE: styles.css
```css
* { box-sizing: border-box; }
html, body { height: 100%; }
body {
  margin: 0;
  display: flex;
  flex-direction: column;
  overflow: hidden;
  position: relative;
  font: 500 6px/8px Inter, "Liberation Sans", sans-serif;
  text-rendering: geometricPrecision;
  color: #2a2a2c;
  background: linear-gradient(90deg, #272727 0%, #343434 20%, #5b5b5b 42%, #8b8b8b 60%, #9c9c9c 75%, #878787 100%);
}
h1, h2, h3, p, ul { margin: 0; padding: 0; font: inherit; }
ul { list-style: none; }
button, input { font: inherit; color: inherit; border: 0; margin: 0; padding: 0; background: none; text-rendering: inherit; }
button { display: flex; align-items: center; justify-content: center; }
input { min-width: 0; background: #fff; }
i { font-style: normal; }
svg { width: 14px; height: 14px; flex: none; display: block; fill: none; stroke: #5a646d; stroke-width: .8; overflow: visible; }
svg.s { width: 6px; height: 6px; }
.sprite { position: absolute; width: 0; height: 0; }
.d { stroke: #3c464e; }
.df { fill: #333d45; stroke: none; }
.b { stroke: #5b97ec; }
.bf { fill: #3d84ea; stroke: none; }
.bl { fill: #a9c9f7; stroke: #5b97ec; }
.o { stroke: #ef9a53; }
.blue { stroke: #3d84ea; }
.green { stroke: #2daa55; }
.red { stroke: #f03a1e; stroke-width: 1.3; }
.off { opacity: .45; }
.grow { flex: 1; min-width: 0; }
.sep { flex: none; width: 8px; height: 13px; background: linear-gradient(#cfcfcf, #cfcfcf) center / 1px 100% no-repeat; }
.sep.clear { background: none; }

.menubar { height: 22px; flex: none; display: flex; align-items: center; gap: 12px; padding: 0 10px; color: #f2f2f2; font-size: 7px; }
.menubar a { color: inherit; text-decoration: none; }
.menubar .app { font-weight: 700; }
.menubar .help { margin-left: 122px; }
.apple { width: 9px; height: 10px; fill: #fff; stroke: none; }
.tray { margin-left: auto; display: flex; align-items: center; gap: 5px; }
.tray svg { stroke: #eee; stroke-width: 1; }
.tray .cal { margin-left: 2px; }
.tray .batt { width: 16px; margin-right: 3px; }
.tray .wf { fill: #fff; stroke: none; }
.date { margin-left: 1px; }

.window { flex: 1; min-height: 0; display: flex; flex-direction: column; margin-left: 1px; border-radius: 6px; background: #ececec; overflow: hidden; }
.titlebar { height: 16px; flex: none; display: flex; align-items: center; justify-content: center; border-bottom: 1px solid #d9d9d9; position: relative; font-size: 7px; font-weight: 600; color: #9a9a9a; gap: 4px; }
.docicon { width: 7px; height: 7px; stroke: #ccc; }
.lights { position: absolute; left: 4px; display: flex; gap: 4px; }
.lights i { width: 8px; height: 8px; border-radius: 50%; background: #cfcfcf; border: 1px solid #c5c5c5; }

.toolbar { height: 21px; flex: none; display: flex; align-items: center; padding-left: 6px; background: linear-gradient(90deg, #efefef 0 605px, #e8e8e8 605px); }
.tb { width: 17px; height: 17px; flex: none; }
.tb svg { width: 13px; height: 13px; }
.tc { width: 9px; height: 17px; flex: none; }
.tb.on, .tools .on { background: #bdbdc1; border-radius: 3px; }
.tc.on { background: #c6c6ca; border-radius: 2px; background-clip: content-box; padding: 0 1px; }

.infobox { height: 36px; flex: none; display: flex; border-top: 1px solid #e1e1e1; }
.infobox section { flex: 0 0 107px; min-width: 0; padding: 2px 3px 0; border-left: 1px solid #dcdcdc; display: flex; flex-direction: column; font-size: 6px; }
.infobox .first { flex-basis: 109px; padding-left: 5px; border-left: 0; }
.infobox .last { flex: 1 0 33px; overflow: hidden; }
.infobox h2, .first > label { font-size: 5px; line-height: 6px; color: #333; white-space: nowrap; }
.line { display: flex; align-items: center; gap: 2px; height: 26px; }
.line input { height: 12px; padding: 0 1px; border-bottom: 1px solid #ddd; }
.cls { width: 10px; height: 10px; }
.eye { width: 12px; height: 12px; }
.wb { height: 17px; padding: 0 2px; background: #fff; border-radius: 3px; box-shadow: 0 0 1px rgba(0, 0, 0, .25); }
.wb.text { justify-content: flex-start; gap: 1px; }
.wb.text .s { margin-left: auto; }
.wb.thin { width: 8px; padding: 0; }
.split p { font-size: 5px; line-height: 7px; padding-top: 4px; white-space: nowrap; }
.split { align-items: stretch; gap: 1px; }
.mini { display: flex; gap: 3px; margin-top: 1px; }
.mini .wb { height: 11px; padding: 0 2px; }
.mini svg { width: 12px; height: 11px; }
.mini .s { width: 6px; height: 6px; }
.wb.on, .mini .wb.on { background: #bcbcc0; padding: 0 5px; }
.split .seat, .split .thin { align-self: center; padding: 0; margin-top: 2px; }
.split .seat { width: 20px; }
.split .thin { width: 6px; }
.geo { justify-content: space-around; }
.geo svg { opacity: .5; width: 13px; height: 13px; }
.floors { padding-top: 4px; font-size: 6px; }
.floors div { display: flex; align-items: center; gap: 3px; height: 14px; padding-left: 5px; white-space: nowrap; }
.floors span { padding-left: 2px; }
.round { flex: none; width: 8px; height: 8px; border-radius: 2px; background: #fff; margin-left: auto; }
.base { display: flex; align-items: center; gap: 2px; height: 26px; }
.tallicon { width: 24px; height: 18px; }
.sizeicon { width: 20px; height: 18px; }
.pair { display: grid; gap: 2px; width: 63px; }
.last .pair { flex: none; }
.pair input { height: 10px; width: 100%; padding: 0 1px; border-bottom: 1px solid #ddd; }

.work { flex: 1; min-height: 0; display: flex; }
.toolbox { width: 52px; flex: none; background: #efefef; overflow: hidden; border-right: 1px solid #ddd; padding-top: 4px; }
.toolbox h3, .navigator h3 { height: 11px; padding-left: 12px; font-weight: 500; font-size: 6px; line-height: 11px; background: #d6d6d6; white-space: nowrap; overflow: hidden; position: relative; }
.toolbox h3::before, .navigator h3::before { content: ""; position: absolute; left: 3px; top: 3px; border: 2px solid transparent; border-top: 4px solid #888; border-bottom: 0; }
.tools { display: grid; grid-template-columns: 24px 26px; grid-auto-rows: 16px; padding: 1px 0 2px; }
.tools svg { width: 13px; height: 13px; }
.tools.top { padding: 0 0 1px; }
.glyph { font-size: 7px; font-weight: 400; color: #555; }
.glyph.big { font-size: 12px; font-weight: 300; }

.center { flex: 1; min-width: 0; display: flex; flex-direction: column; background: #fff; }
.tabs { height: 12px; flex: none; display: flex; background: #e0e0e0; }
.tab { flex: 0 0 22%; gap: 1px; font-size: 6px; border-right: 1px solid #bbb; }
.tab svg, .quad svg { width: 12px; height: 12px; }
.tab.active { background: #fff; border: 0; }
.quad { width: 19px; background: #ececec; }
.quick { background: #f5f5f5; width: 29px; }
.canvas { flex: 1; min-height: 0; position: relative; }
.drawing { width: 100%; height: 100%; stroke: #6c6c6c; stroke-width: 1; overflow: hidden; }
.palette { position: absolute; left: 3px; top: 44px; height: 20px; display: flex; align-items: center; background: #e8e8e8; border: 1px solid #e2e2e2; padding-right: 2px; }
.palette button { width: 17px; height: 17px; position: relative; }
.palette button svg { width: 13px; height: 13px; }
.palette .sep { width: 6px; }
.palette .on { background: #a9a9ac; border-radius: 2px; }
.palette .off { opacity: .6; }
.palette button .badge { position: absolute; right: 0; top: 1px; width: 7px; height: 7px; stroke-width: 1.5; }
.palette button .low { top: 8px; }
.grip { width: 9px; height: 100%; border-right: 1px solid #ccc; margin-right: 1px; background: radial-gradient(circle at 4px 4px, #ccc 2px, transparent 3px); }
.status { height: 13px; flex: none; display: flex; align-items: center; background: #ececec; }
.status > button { flex: 1; min-width: 0; height: 12px; padding: 0 2px; border-left: 1px solid #ddd; }
.status span { flex: 1; font-size: 6px; text-align: center; white-space: nowrap; }
.status svg { width: 11px; height: 11px; }
.status .s { width: 6px; height: 6px; }
.zooms { width: 41px; flex: none; display: flex; justify-content: space-around; }

.navigator { width: 156px; flex: none; display: flex; flex-direction: column; background: #ececec; border-left: 1px solid #dcdcdc; padding-left: 1px; }
.navtop { height: 24px; flex: none; display: flex; align-items: center; padding-top: 2px; }
.navtop .sep { width: 6px; }
.navtop .wb { height: 13px; padding: 0; }
.search { flex: none; height: 12px; margin: 1px 1px 1px 0; padding: 0 2px; color: #aaa; }
.search::placeholder { color: #b3b3b3; opacity: 1; }
.maptree { flex: 1; min-height: 0; overflow: hidden; background: #fff; padding-top: 29px; }
.maptree li { display: flex; align-items: center; gap: 1px; height: 14px; white-space: nowrap; }
.maptree svg { width: 12px; height: 12px; }
.maptree .s { width: 7px; height: 7px; }
.l1 { padding-left: 1px; }
.l2 { padding-left: 9px; }
.l2:not(:has(svg)) { padding-left: 30px; }
.l3 { padding-left: 25px; }
.l3:not(:has(svg)) { padding-left: 38px; }
.sel { background: #dadada; font-weight: 700; }
.hscroll { height: 9px; flex: none; background: #fafafa; padding: 2px 7px 2px 1px; }
.hscroll i { display: block; height: 5px; border-radius: 3px; background: #c1c1c1; }
.navactions { height: 20px; flex: none; display: flex; align-items: center; gap: 4px; padding: 0 0 2px 2px; }
.navactions svg { width: 13px; height: 13px; }
.navigator h3 { flex: none; background: #d3d3d3; height: 12px; line-height: 12px; }
.prop { flex: none; display: flex; align-items: center; height: 15px; }
.prop svg { width: 10px; height: 10px; }
.prop label { width: 38px; }
.prop input { flex: 1; height: 9px; padding: 0 2px; }
.defs { flex: none; height: 11px; margin: 0 1px 4px 0; background: #fff; border-radius: 3px; box-shadow: 0 0 1px rgba(0, 0, 0, .3); }
footer { flex: none; height: 13px; display: flex; align-items: center; justify-content: flex-end; gap: 5px; padding: 0 6px 2px 0; font: 400 8px/10px Lato, sans-serif; }
footer i { color: #777; }
footer svg { width: 11px; height: 11px; }
.bar { color: #aaa; }

.dialog { position: absolute; left: 583px; top: 125px; width: 320px; border-radius: 6px; background: #ebebeb; box-shadow: 0 0 1px rgba(0, 0, 0, .6), 0 9px 24px rgba(0, 0, 0, .45); }
.dialog h2 { height: 17px; border-bottom: 1px solid #dedede; background: #f6f6f6; border-radius: 6px 6px 0 0; font-size: 7px; font-weight: 700; line-height: 16px; text-align: center; color: #333; }
.dbody { padding: 2px 6px 3px; font-size: 6px; }
.check { display: flex; align-items: center; gap: 3px; height: 10px; margin-bottom: 4px; }
.check input { appearance: none; width: 8px; height: 8px; border-radius: 2px; background: #1880f8; position: relative; }
.check input::after { content: ""; position: absolute; left: 3px; top: 1px; width: 3px; height: 5px; border: solid #fff; border-width: 0 1px 1px 0; transform: rotate(40deg); }
.check.second { margin-top: 21px; }
.row { display: grid; grid-template-columns: 123px 34px 97px 22px 20px; align-items: center; height: 16px; }
.row .ratio { padding-left: 10px; }
.row input { height: 11px; padding: 0 2px; }
.row input:disabled { background: #f2f2f2; color: #b3b3b3; border-bottom: 1px solid #e1e1e1; }
.row span { padding-left: 3px; }
.row label { white-space: nowrap; }
.row.pen { grid-template-columns: 130px 1fr; height: 19px; margin-top: 4px; }
.penbox { display: flex; align-items: center; gap: 3px; }
.row .focus { display: flex; align-items: center; width: 25px; height: 12px; background: #fff; outline: 2px solid #7da2e8; outline-offset: -1px; }
.focus mark { color: inherit; background: #abcdfc; padding: 0; }
.focus input { width: 4px; height: 8px; }
.color { height: 10px; width: 18px; gap: 4px; }
.color i { width: 1px; height: 6px; background: #f20; }
.color b { width: 7px; height: 6px; background: #f20; }
.row.hatchrow { grid-template-columns: 123px 100px; height: 17px; }
.hatchrow .wb { justify-content: flex-start; }
.hatchrow .wb i { width: 12px; height: 13px; background: #7e7e7e; border: 1px solid #444; }
.hatchrow .wb .s { margin-left: auto; }
.dfoot { display: flex; gap: 5px; height: 19px; align-items: center; border-top: 1px solid #d9d9d9; padding: 0 6px; font-size: 6px; }
.dfoot button { height: 11px; border-radius: 3px; background: #fff; box-shadow: 0 0 1px rgba(0, 0, 0, .4); }
.prev { flex: 0 0 97px; }
.next { flex: 0 0 92px; }
.cancel { flex: 0 0 53px; margin-left: auto; }
.dfoot .ok { flex: 0 0 42px; background: #0a7cf8; color: #fff; }
```
